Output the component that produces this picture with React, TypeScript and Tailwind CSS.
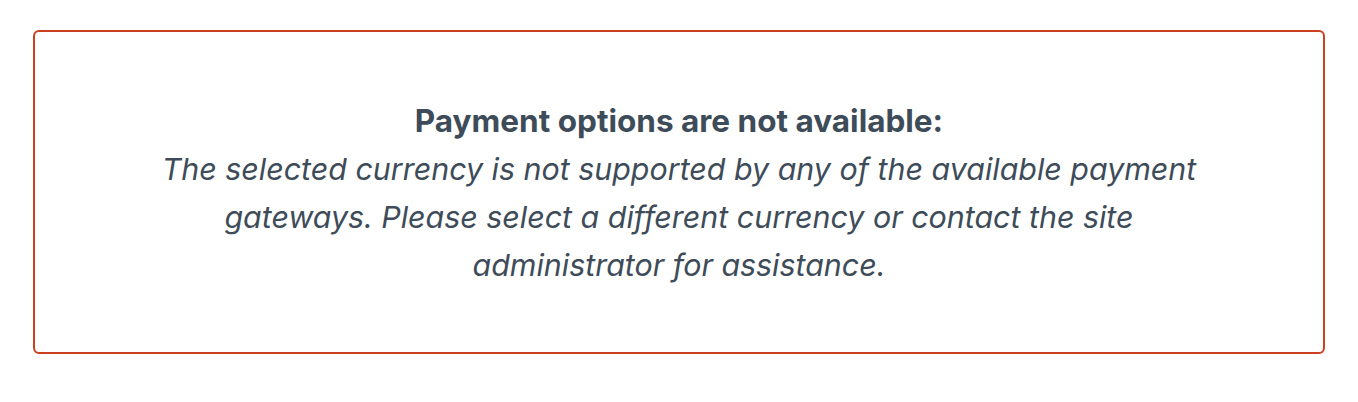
import React from "react"

function PaymentNotice() {
  return (
    <div className="rounded-md border-2 border-[#cc3f1f] bg-white px-[60px] pt-[65px] pb-[63px] text-center text-[#3e4c59]">
      <p className="text-[31.5px] font-bold leading-[48px]">
        Payment options are not available:
      </p>
      <p className="mx-auto max-w-[1070px] text-[30.4px] italic leading-[48px]">
        The selected currency is not supported by any of the available payment
        gateways. Please select a different currency or contact the site
        administrator for assistance.
      </p>
    </div>
  )
}

export default function App() {
  return (
    <div
      className="h-[402px] w-full bg-white px-[33px] pt-[30px]"
      style={{ fontFamily: "Inter, 'Noto Sans', sans-serif" }}
    >
      <PaymentNotice />
    </div>
  )
}
